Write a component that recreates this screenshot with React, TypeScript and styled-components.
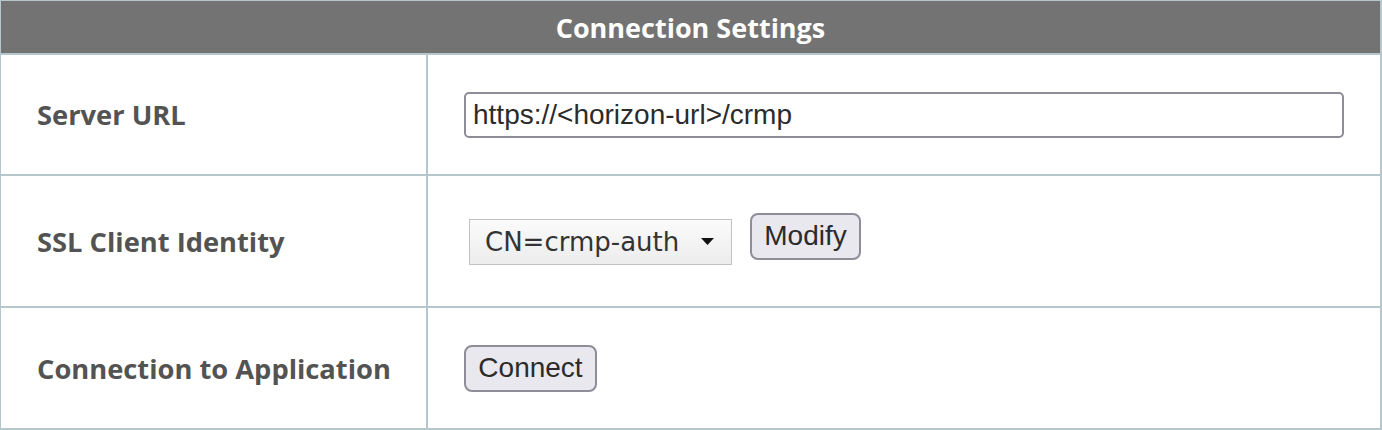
import React from "react";
import styled, { createGlobalStyle } from "styled-components";

const GlobalStyle = createGlobalStyle`
  html, body { margin: 0; padding: 0; background: #ffffff; }
  body { font-family: "Open Sans", "Liberation Sans", sans-serif; }
`;

const BORDER = "#b5c6cc";

const Panel = styled.div`
  width: 1382px;
  height: 430px;
  box-sizing: border-box;
  border-style: solid;
  border-color: ${BORDER};
  border-width: 1px 2px 2px 1px;
  display: flex;
  flex-direction: column;
`;

const Header = styled.div`
  height: 52px;
  background: #737373;
  border-bottom: 2px solid ${BORDER};
  display: flex;
  align-items: center;
  justify-content: center;
  color: #ffffff;
  font-family: "Open Sans", sans-serif;
  font-weight: 700;
  font-size: 27px;
`;

const Row = styled.div<{ $h: number; $last?: boolean }>`
  height: ${(p) => p.$h}px;
  display: grid;
  grid-template-columns: 427px 1fr;
  border-bottom: ${(p) => (p.$last ? "none" : `2px solid ${BORDER}`)};
`;

const LabelCell = styled.div`
  border-right: 2px solid ${BORDER};
  display: flex;
  align-items: center;
  padding-left: 36px;
  color: #535353;
  font-family: "Open Sans", sans-serif;
  font-weight: 700;
  font-size: 27.3px;
`;

const ValueCell = styled.div`
  display: flex;
  align-items: center;
  padding-left: 36px;
  padding-right: 36px;
`;

const TextInput = styled.input`
  width: 880px;
  height: 46px;
  box-sizing: border-box;
  border: 2px solid #8f8c98;
  border-radius: 5px;
  padding: 0 0 0 7px;
  font-family: "Liberation Sans", Arial, sans-serif;
  font-size: 28px;
  color: #2b2b2b;
  background: #fff;
  outline: none;
`;

const Controls = styled.div`
  display: flex;
  align-items: flex-start;
  gap: 18px;
  margin-bottom: 5px;
`;

const FakeSelect = styled.div`
  margin-left: 5px;
  margin-top: 6px;
  width: 263px;
  height: 46px;
  box-sizing: border-box;
  border: 1px solid #c2c2c2;
  background: linear-gradient(#fbfbfb, #ececec);
  display: flex;
  align-items: center;
  justify-content: space-between;
  padding: 0 17px 0 15px;
  font-family: "DejaVu Sans", sans-serif;
  font-size: 26px;
  color: #333;
`;

const Button = styled.button<{ $w: number }>`
  width: ${(p) => p.$w}px;
  height: 47px;
  box-sizing: border-box;
  border: 2px solid #8f8d97;
  border-radius: 8px;
  background: #e9e8ee;
  font-family: "Liberation Sans", Arial, sans-serif;
  font-size: 28px;
  color: #2b2b2b;
  padding: 0;
  display: flex;
  align-items: center;
  justify-content: center;
`;

const Caret = () => (
  <svg width="13" height="7" viewBox="0 0 13 7">
    <path d="M0 0 H13 L6.5 7 Z" fill="#111" />
  </svg>
);

export default function App() {
  return (
    <>
      <GlobalStyle />
      <Panel>
        <Header>Connection Settings</Header>
        <Row $h={119}>
          <LabelCell>Server URL</LabelCell>
          <ValueCell>
            <TextInput readOnly value="https://<horizon-url>/crmp" />
          </ValueCell>
        </Row>
        <Row $h={130}>
          <LabelCell>SSL Client Identity</LabelCell>
          <ValueCell>
            <Controls>
              <FakeSelect>
                <span>CN=crmp-auth</span>
                <Caret />
              </FakeSelect>
              <Button $w={111}>Modify</Button>
            </Controls>
          </ValueCell>
        </Row>
        <Row $h={120} $last>
          <LabelCell>Connection to Application</LabelCell>
          <ValueCell>
            <Button $w={133}>Connect</Button>
          </ValueCell>
        </Row>
      </Panel>
    </>
  );
}
